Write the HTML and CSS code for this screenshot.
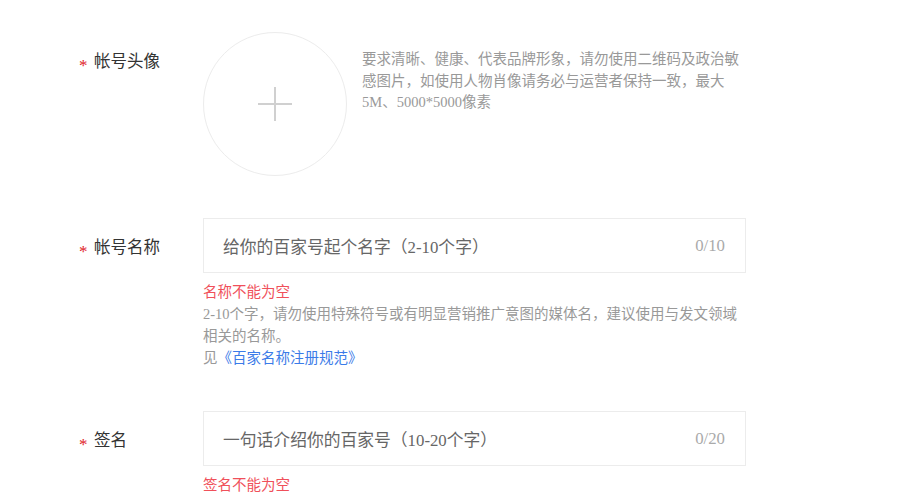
FILE: index.html
```html
<!DOCTYPE html>
<html lang="zh-CN">
<head>
<meta charset="utf-8">
<title>百家号信息</title>
<link rel="stylesheet" href="styles.css">
</head>
<body>
<div class="form">
  <div class="row">
    <div class="label"><span class="star">*</span>帐号头像</div>
    <div class="field avatar-field">
      <div class="avatar"><span class="plus-h"></span><span class="plus-v"></span></div>
      <p class="desc">要求清晰、健康、代表品牌形象，请勿使用二维码及政治敏感图片，如使用人物肖像请务必与运营者保持一致，最大5M、5000*5000像素</p>
    </div>
  </div>
  <div class="row">
    <div class="label"><span class="star">*</span>帐号名称</div>
    <div class="field">
      <div class="input"><span class="ph">给你的百家号起个名字（2-10个字）</span><span class="count">0/10</span></div>
      <p class="error">名称不能为空</p>
      <p class="hint">2-10个字，请勿使用特殊符号或有明显营销推广意图的媒体名，建议使用与发文领域相关的名称。</p>
      <p class="hint">见<a class="link" href="#">《百家名称注册规范》</a></p>
    </div>
  </div>
  <div class="row">
    <div class="label"><span class="star">*</span>签名</div>
    <div class="field">
      <div class="input"><span class="ph">一句话介绍你的百家号（10-20个字）</span><span class="count">0/20</span></div>
      <p class="error">签名不能为空</p>
    </div>
  </div>
</div>
</body>
</html>
```
FILE: styles.css
```css
html, body {
  margin: 0;
  padding: 0;
  background: #fff;
}
body {
  font-family: "Liberation Serif", "Noto Sans CJK SC", serif;
  color: #333;
}
.form {
  padding: 32px 0 0 79px;
}
.row {
  display: flex;
  margin-bottom: 42px;
}
.row:last-child {
  margin-bottom: 0;
}
.label {
  width: 124px;
  flex: none;
  padding-top: 18px;
  font-size: 16.5px;
  line-height: 24px;
  color: #333;
  display: flex;
}
.star {
  width: 15px;
  color: #e0201e;
  font-size: 17px;
  line-height: 24px;
  padding-top: 4px;
}
.field {
  width: 543px;
}
.avatar-field {
  display: flex;
}
.avatar {
  width: 142px;
  height: 142px;
  border: 1px solid #ececec;
  border-radius: 50%;
  flex: none;
  display: flex;
  align-items: center;
  justify-content: center;
  position: relative;
}
.plus-h {
  width: 34px;
  height: 2px;
  background: #d0d0d0;
}
.plus-v {
  position: absolute;
  width: 2px;
  height: 34px;
  background: #d0d0d0;
}
.desc {
  margin: 0 0 0 15px;
  padding-top: 17px;
  width: 384px;
  font-size: 14.5px;
  line-height: 21.5px;
  color: #999;
}
.input {
  height: 53px;
  border: 1px solid #ececec;
  display: flex;
  align-items: center;
  justify-content: space-between;
  padding: 0 20px 0 19px;
  font-size: 16.8px;
}
.ph {
  color: #666;
}
.count {
  color: #aaa;
}
.error {
  margin: 8px 0 0;
  font-size: 14.5px;
  line-height: 22px;
  color: #f0505a;
}
.hint {
  margin: 0;
  font-size: 14.5px;
  line-height: 22px;
  color: #999;
}
.link {
  color: #3b7be8;
  text-decoration: none;
}
```
